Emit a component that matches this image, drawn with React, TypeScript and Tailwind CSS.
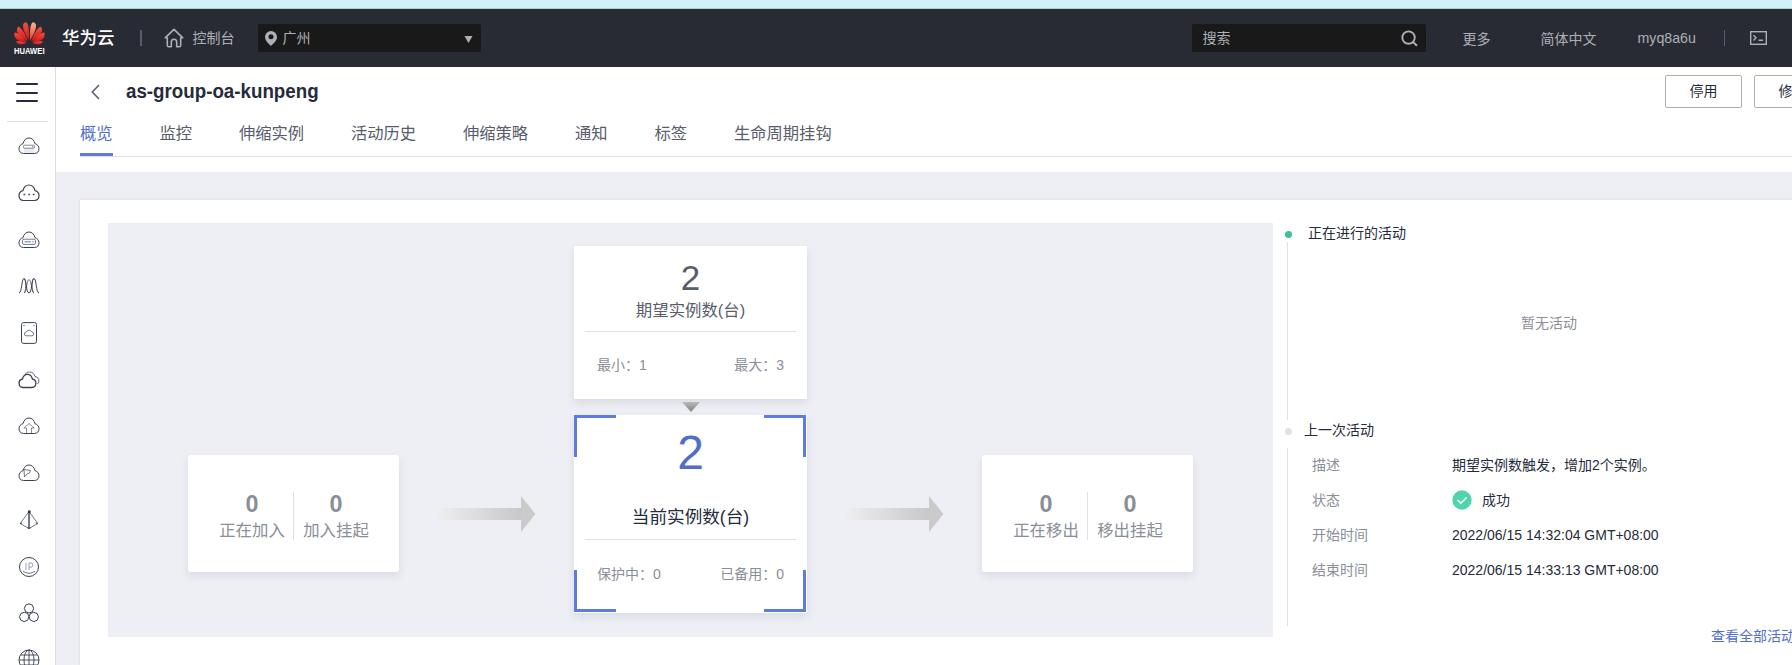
import React from "react";

const CLOUD = "M5.500 18.500A4.900 4.900 0 0 1 1 13.700C1 11.300 2.600 9.300 5 8.700 5.800 5.200 8 3 11 3s5.200 2.200 6 5.700c2.400.6 4 2.600 4 5a4.900 4.900 0 0 1-4.500 4.800z";

const icons: React.ReactNode[] = [
  <>
    <path d="M6 13h10v4.800H6z" fill="#e9eaf2" stroke="none" />
    <path d={CLOUD} />
    <rect x="5.500" y="10.200" width="11" height="3" rx="1" strokeWidth=".6" />
    <path d="M14.300 11.700h1" stroke="#c0392b" />
  </>,
  <>
    <path d={CLOUD} strokeWidth="1.200" />
    <path d="M5.500 12.500h1.700M10.200 12.500h1.700M14.800 12.500h1.700" strokeWidth="1.700" />
  </>,
  <>
    <path d={CLOUD} />
    <rect x="4.500" y="10.200" width="13" height="5.200" rx="1.500" strokeWidth=".7" />
    <path d="M6.500 12.800h6.500M14.200 12.800h1.500" stroke="#5b7fb5" />
  </>,
  <>
    <path d="M1 18C4 18 3.500 3.500 6 3.500S8 18 11 18 13.500 3.500 16 3.500 18 18 21 18" />
    <path d="M6 3.500C8.500 3.500 8 18 6 18M16 3.500C13 3.500 14 18 16 18" strokeWidth=".7" />
    <path d="M6 18C8.800 18 8.500 4.500 11 4.500S13.500 18 16 18" strokeWidth=".7" />
  </>,
  <>
    <rect x="3.500" y=".6" width="15" height="20.800" rx="2" />
    <path d="M8.300 13.800a1.900 1.900 0 0 1 0-3.800 3 3 0 0 1 5.500 0 1.900 1.900 0 0 1 0 3.800z" strokeWidth=".7" />
    <path d="M5.500 3.500h1M15.500 3.500h1" />
  </>,
  <>
    <path d="M5 18.500a4.300 4.300 0 0 1-.5-8.500C5.200 7 7 5.300 9.500 5.300S13.700 7 14.400 10a4.300 4.300 0 0 1-.5 8.500z" strokeWidth="1.300" />
    <path d="M7.500 4.800C8.500 3.600 9.800 3 11.500 3c2.800 0 4.800 1.700 5.500 4.500a4.300 4.300 0 0 1 2.500 7.500" strokeWidth=".8" />
  </>,
  <>
    <path d={CLOUD} />
    <path d="M8.500 18V13H5.800L11 8.500l5.200 4.500h-2.700v5" strokeWidth=".8" stroke="#6c7080" />
  </>,
  <>
    <path d={CLOUD} />
    <path d="M6 7.500 6.500 15l2.500-3 2.500-1 1-2.500z" strokeWidth=".7" />
  </>,
  <>
    <path d="M11 2.500 2.200 14.500 11 19.500l8.800-5z" strokeWidth=".7" />
    <path d="M11 3v16" strokeWidth="1.400" />
    <path d="M10 1.500h2.500V4H10z" fill="#252b3a" stroke="none" />
    <path d="m2.200 14.500 2-.5M19.800 14.500l-2-.5M9.500 18.800l1.500.7 1.500-.7" />
  </>,
  <>
    <circle cx="11" cy="11" r="9.500" />
    <path d="M8 7v7M11 14V7h1.800a2 2 0 0 1 0 4.200H11" strokeWidth=".9" stroke="#8a94b8" />
    <path d="M5 15.300q6 4 12 0" strokeWidth=".7" />
  </>,
  <>
    <path d="m11 1.800 3.300 1.300 1.400 3.300-1.400 3.400L11 11 7.700 9.800 6.300 6.400l1.400-3.300zM6.300 10.300l3.300 1.200L11 14.800l-1.400 3.400-3.400 1.400-3.400-1.400-1.300-3.400 1.300-3.300zM15.700 10.300l3.500 1.200 1.300 3.300-1.300 3.400-3.400 1.400-3.400-1.400-1.400-3.400 1.400-3.300z" />
  </>,
  <>
    <circle cx="11" cy="11" r="10" />
    <ellipse cx="11" cy="11" rx="5" ry="10" strokeWidth=".9" />
    <path d="M11 1v20M1 11h20M3 6h16M3 16h16" strokeWidth=".9" />
  </>,
];

function Logo() {
  return (
    <svg width="31" height="33" viewBox="0 0 31 33">
      <defs>
        <linearGradient id="petal" x1="0" y1="0" x2="0" y2="1">
          <stop offset="0" stopColor="#f4523c" />
          <stop offset="1" stopColor="#c8151d" />
        </linearGradient>
        <linearGradient id="petalLight" x1="0" y1="0" x2="0" y2="1">
          <stop offset="0" stopColor="#fbb98c" />
          <stop offset="1" stopColor="#e3342a" />
        </linearGradient>
      </defs>
      <g fill="url(#petal)">
        <path d="M14.800 18.500C15.500 11 15 2 12.200.3 9.500.5 8.700 2.500 9 5c.5 4 3.500 9.500 5.800 13.500z" />
        <path d="M13.700 19.200C11.500 12.500 8 6.500 4.500 4.600 2.300 6.500 2.500 9 4 11.500c2.200 3.500 6.500 6 9.700 7.700z" />
        <path d="M12.800 20.200C8.500 15 4.500 11.200.7 10.600c-1 3.200.3 5.700 3 7.300 2.500 1.500 6 2.100 9.100 2.300z" />
        <path d="M12.600 21C9 19.600 5.500 18.900 2.100 19.300c1 2.600 3.200 3.500 5.400 3.200 2-.3 3.700-.9 5.100-1.500z" />
        <path d="M17.300 19.200C19.500 12.500 23 6.500 26.500 4.600c2.200 1.900 2 4.400.5 6.900-2.200 3.500-6.500 6-9.700 7.700z" />
        <path d="M18.200 20.200c4.300-5.200 8.300-9 12.100-9.600 1 3.200-.3 5.700-3 7.300-2.500 1.500-6 2.100-9.100 2.300z" />
        <path d="M18.400 21c3.600-1.400 7.100-2.100 10.500-1.700-1 2.600-3.200 3.500-5.400 3.200-2-.3-3.700-.9-5.100-1.500z" />
      </g>
      <path fill="url(#petalLight)" d="M16.200 18.500C15.500 11 16 2 18.800.3c2.700.2 3.500 2.200 3.200 4.700-.5 4-3.500 9.500-5.800 13.500z" />
      <text x="0" y="31.600" fill="#fff" fontSize="8.200" fontWeight="700" fontFamily="Liberation Sans, sans-serif" textLength="30.500" lengthAdjust="spacingAndGlyphs">
        HUAWEI
      </text>
    </svg>
  );
}

function Header() {
  return (
    <header className="flex h-[58px] shrink-0 items-center bg-[#282b33] pl-[14px] text-[14px] leading-5 text-[#adb0b8]">
      <div className="shrink-0">
        <Logo />
      </div>
      <span className="ml-[17px] w-[78px] shrink-0 text-[17.500px] font-medium text-white">华为云</span>
      <span className="h-4 w-[1.500px] shrink-0 bg-[#575d6c]" />
      <svg className="ml-[22px] mr-px shrink-0" width="20" height="20" viewBox="0 0 20 20" fill="none" stroke="#adb0b8" strokeWidth="1.600" strokeLinejoin="round">
        <path d="M3.300 9.800H1.200L10 1.300l8.800 8.500h-2.100v7.500q0 1.400-1.400 1.400h-2.600v-4.700q0-2.700-2.700-2.700t-2.700 2.700v4.700H4.700q-1.400 0-1.400-1.400z" />
      </svg>
      <span className="ml-2 w-[65px] shrink-0">控制台</span>
      <div className="flex h-7 w-[223px] shrink-0 items-center rounded-[2px] bg-[#191919] pl-[7px] pr-2">
        <svg width="12" height="15" viewBox="0 0 12 15" fill="#adb0b8">
          <path fillRule="evenodd" d="M6 0a6 6 0 0 1 6 6c0 3.500-3.500 6.500-6 9-2.500-2.500-6-5.500-6-9a6 6 0 0 1 6-6zm0 3.300a2.500 2.500 0 1 0 0 5 2.500 2.500 0 0 0 0-5z" />
        </svg>
        <span className="ml-[6px] flex-1">广州</span>
        <svg className="mt-0.5" width="9" height="7" viewBox="0 0 9 7" fill="#adb0b8">
          <path d="M.5 0h8l-4 7z" />
        </svg>
      </div>
      <div className="ml-[711px] flex h-7 w-[234px] shrink-0 items-center rounded-[2px] bg-[#191919] pl-[11px] pr-2">
        <span className="flex-1">搜索</span>
        <svg width="17" height="17" viewBox="0 0 18 18" fill="none" stroke="#adb0b8" strokeWidth="2">
          <circle cx="8" cy="8" r="6.600" />
          <path d="m12.700 12.700 4.200 4" />
        </svg>
      </div>
      <span className="ml-[37px] mt-px w-[78px] shrink-0">更多</span>
      <span className="mt-px w-[97px] shrink-0">简体中文</span>
      <span className="w-[86px] shrink-0 text-[14.200px]">myq8a6u</span>
      <span className="h-4 w-[1.500px] shrink-0 bg-[#575d6c]" />
      <svg className="ml-[25px] shrink-0" width="17" height="14" viewBox="0 0 17 14" fill="none" stroke="#adb0b8" strokeWidth="1.400">
        <rect x=".7" y=".7" width="15.600" height="12.600" />
        <path d="m3.500 4.200 2.500 2.600-2.500 2.700M8.500 9.200h4.500" />
      </svg>
    </header>
  );
}

function Sidebar() {
  return (
    <aside className="flex w-[56px] shrink-0 flex-col overflow-hidden border-r border-[#dcdde3] bg-white">
      <div className="ml-4 mt-4 flex h-[19px] w-[22px] shrink-0 flex-col justify-between">
        <span className="h-[2px] rounded bg-[#252b3a]" />
        <span className="h-[2px] rounded bg-[#252b3a]" />
        <span className="h-[2px] rounded bg-[#252b3a]" />
      </div>
      <div className="ml-[7px] mt-[19px] h-px w-[41px] shrink-0 bg-[#dcdde3]" />
      <nav className="mt-px flex flex-col pl-[18px]">
        {icons.map((icon, i) => (
          <div key={i} className="flex h-[46.700px] shrink-0 items-center">
            <svg width="22" height="22" viewBox="0 0 22 22" fill="none" stroke="#3b4050" strokeLinejoin="round">
              {icon}
            </svg>
          </div>
        ))}
      </nav>
    </aside>
  );
}

const tabs = ["概览", "监控", "伸缩实例", "活动历史", "伸缩策略", "通知", "标签", "生命周期挂钩"];

function PageHead() {
  return (
    <div className="flex h-[105px] shrink-0 flex-col bg-white pl-6">
      <div className="flex h-[49px] items-start">
        <svg className="ml-[11px] mt-[17px] shrink-0" width="9" height="16" viewBox="0 0 9 16" fill="none" stroke="#575d6c" strokeWidth="1.500">
          <path d="M8 1 1.300 8 8 15" />
        </svg>
        <span className="ml-[14px] mt-[15px] h-[19px] w-px bg-[#dfe1e6]" />
        <h1 className="ml-3 mt-3 w-[1538px] shrink-0 text-[20px] leading-6 font-bold text-[#252b3a]">
          <span className="inline-block origin-left scale-x-[0.937]">as-group-oa-kunpeng</span>
        </h1>
        <div className="ml-px mt-2 flex shrink-0 gap-3">
          <button className="h-[33px] w-[77px] rounded-[2px] border border-[#adb0b8] text-[14px] text-[#252b3a]">停用</button>
          <button className="h-[33px] w-[77px] rounded-[2px] border border-[#adb0b8] text-[14px] text-[#252b3a]">修改</button>
        </div>
      </div>
      <div className="flex h-[41px] gap-[46.900px] border-b border-[#dfe1e6] text-[16.300px] leading-6 text-[#575d6c]">
        {tabs.map((tab, i) => (
          <span key={tab} className={i === 0 ? "h-10 shrink-0 border-b-[3px] border-[#5e7ce0] pt-[5px] text-[#526ecc]" : "shrink-0 pt-[5px]"}>
            {tab}
          </span>
        ))}
      </div>
    </div>
  );
}

function SideCard({ items }: { items: [string, string][] }) {
  return (
    <div className="flex h-[117px] w-[211px] shrink-0 justify-center rounded-[3px] bg-white pt-[37px] shadow-[0_4px_8px_rgba(40,50,80,0.1)]">
      {items.map(([value, label], i) => (
        <div
          key={label}
          className={i === 0 ? "flex h-12 w-[84px] flex-col items-center border-r border-[#dfe1e6] pl-[2px]" : "flex h-12 w-[84px] flex-col items-center pl-px"}
        >
          <span className="text-[23.300px] leading-[25px] font-bold">{value}</span>
          <span className="text-[16.400px] leading-[27px]">{label}</span>
        </div>
      ))}
    </div>
  );
}

function Arrow() {
  return (
    <svg width="98" height="36" viewBox="0 0 98 36" className="shrink-0">
      <defs>
        <linearGradient id="shaft">
          <stop offset="0" stopColor="#eeeeee" />
          <stop offset="1" stopColor="#c8c8c8" />
        </linearGradient>
      </defs>
      <path d="M0 12h83v12H0z" fill="url(#shaft)" />
      <path d="M83 0v36l14.500-18z" fill="#cacaca" />
    </svg>
  );
}

function Diagram() {
  return (
    <section className="flex h-[414px] w-[1165px] shrink-0 bg-[#eeeff5] pl-20 text-[#8a8e99]">
      <div className="mt-[232px]">
        <SideCard items={[["0", "正在加入"], ["0", "加入挂起"]]} />
      </div>
      <div className="ml-[39px] mt-[273px]">
        <Arrow />
      </div>
      <div className="ml-[38px] mt-[23px] flex w-[233px] shrink-0 flex-col items-center">
        <div className="flex h-[153px] w-full flex-col bg-white px-[11px] text-center shadow-[0_4px_8px_rgba(40,50,80,0.1)]">
          <span className="mt-[14px] text-[35px] leading-9 text-[#575d6c]">2</span>
          <span className="h-9 border-b border-[#dfe1e6] text-[16.400px] leading-7 text-[#575d6c]">期望实例数(台)</span>
          <div className="mt-[23px] flex justify-between px-3 text-[14px] leading-5">
            <span>最小：1</span>
            <span>最大：3</span>
          </div>
        </div>
        <svg className="my-[3px]" width="18" height="10" viewBox="0 0 18 10">
          <defs>
            <linearGradient id="down" x1="0" y1="0" x2="0" y2="1">
              <stop offset="0" stopColor="#b8b8b8" />
              <stop offset="1" stopColor="#848484" />
            </linearGradient>
          </defs>
          <path d="M0 0h18L9 10z" fill="url(#down)" />
        </svg>
        <div className="relative flex h-[198px] w-full flex-col bg-white px-[11px] text-center shadow-[0_4px_8px_rgba(40,50,80,0.1)]">
          <i className="absolute left-0 top-0 size-[42px] border-l-[3px] border-t-[3px] border-[#5e7ce0]" />
          <i className="absolute right-px top-0 size-[42px] border-r-[3px] border-t-[3px] border-[#5e7ce0]" />
          <i className="absolute bottom-px left-0 size-[42px] border-b-[3px] border-l-[3px] border-[#5e7ce0]" />
          <i className="absolute bottom-px right-px size-[42px] border-b-[3px] border-r-[3px] border-[#5e7ce0]" />
          <span className="mt-[14px] text-[48px] leading-[48px] text-[#526ecc]">2</span>
          <span className="mt-[26px] h-[37px] border-b border-[#dfe1e6] text-[17.600px] leading-7 text-[#252b3a]">当前实例数(台)</span>
          <div className="mt-6 flex justify-between px-3 text-[14px] leading-5">
            <span>保护中：0</span>
            <span>已备用：0</span>
          </div>
        </div>
      </div>
      <div className="ml-[39px] mt-[273px]">
        <Arrow />
      </div>
      <div className="ml-[38px] mt-[232px]">
        <SideCard items={[["0", "正在移出"], ["0", "移出挂起"]]} />
      </div>
    </section>
  );
}

function Field({ label, children }: { label: string; children: React.ReactNode }) {
  return (
    <div className="flex h-[35.200px] items-center">
      <span className="w-[140px] shrink-0 text-[#8a8e99]">{label}</span>
      <span className="flex items-center whitespace-nowrap">{children}</span>
    </div>
  );
}

function Activities() {
  return (
    <section className="ml-3 w-[600px] shrink-0 text-[14px] leading-5 text-[#252b3a]">
      <div className="flex h-[19px] items-center">
        <span className="mt-1 size-[7px] rounded-full bg-[#3ac295]" />
        <span className="ml-4">正在进行的活动</span>
      </div>
      <div className="ml-[2px] h-[178px] border-l border-[#dfe1e6] pl-[233px] pt-[71px] text-[#8a8e99]">暂无活动</div>
      <div className="flex h-7 items-center">
        <span className="mb-[5px] size-[7px] rounded-full bg-[#dfe1e6]" />
        <span className="mb-2 ml-3">上一次活动</span>
      </div>
      <div className="ml-[2px] flex h-[178px] flex-col border-l border-[#dfe1e6] pl-[24px]">
        <div className="-mt-px">
          <Field label="描述">期望实例数触发，增加2个实例。</Field>
          <Field label="状态">
            <svg className="mr-[10px]" width="20" height="20" viewBox="0 0 20 20">
              <circle cx="10" cy="10" r="9.700" fill="#50d4ab" />
              <path d="m5.500 10 3.300 3.300 5.800-5.800" fill="none" stroke="#fff" strokeWidth="1.500" />
            </svg>
            成功
          </Field>
          <Field label="开始时间">2022/06/15 14:32:04 GMT+08:00</Field>
          <Field label="结束时间">2022/06/15 14:33:13 GMT+08:00</Field>
        </div>
      </div>
      <a className="ml-[426px] block text-[#526ecc]">查看全部活动</a>
    </section>
  );
}

export default function App() {
  return (
    <div className="flex h-[665px] w-[1792px] flex-col overflow-hidden bg-white font-['Liberation_Sans','Noto_Sans_CJK_SC',sans-serif]">
      <div className="h-[9px] shrink-0 border-b border-[#b4cdd5] bg-[#cff1f8]" />
      <Header />
      <div className="flex min-h-0 flex-1">
        <Sidebar />
        <div className="flex min-w-0 flex-1 flex-col overflow-hidden bg-[#eeeff5]">
          <PageHead />
          <main className="ml-6 mt-7 flex flex-1 bg-white pl-7 pt-[23px] shadow-[0_0_3px_rgba(40,50,80,0.12)]">
            <Diagram />
            <Activities />
          </main>
        </div>
      </div>
    </div>
  );
}
